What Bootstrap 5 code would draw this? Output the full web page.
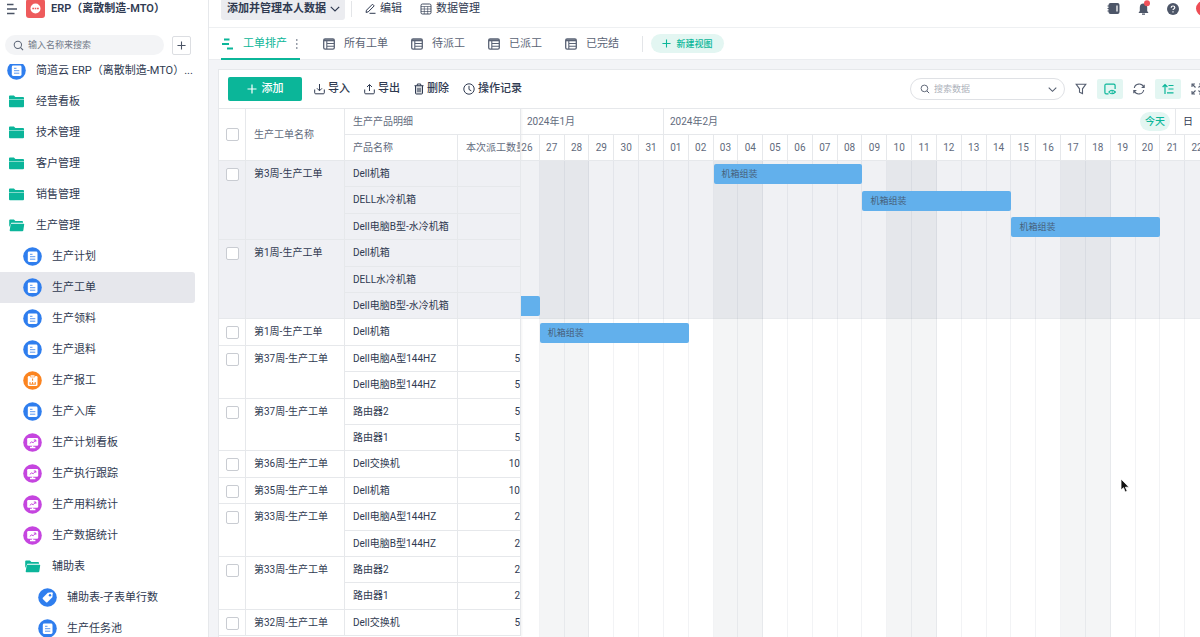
<!DOCTYPE html>
<html lang="zh-CN">
<head>
<meta charset="utf-8">
<meta name="viewport" content="width=device-width, initial-scale=1">
<title>ERP（离散制造-MTO）</title>
<link rel="stylesheet" href="https://cdn.jsdelivr.net/npm/bootstrap@5.3.0/dist/css/bootstrap.min.css">
<style>
:root { --ink:#2f3a51; --soft:#626b7d; --line:#e6e8eb; --brand:#0bb699; --mint:#e3f6f2; --blue:#2f7eee; --bar:#62b0ec; }
body { font-family: Roboto, "Noto Sans CJK SC", sans-serif; font-size: 11px; line-height: 16px; color: var(--ink); background: #fff; }
svg { display: block; flex: none; }
button, input { font: inherit; color: inherit; }
.plain { border: 0; background: none; padding: 0; }
a { color: inherit; text-decoration: none; }

/* sidebar */
.side { width: 209px; border-right: 1px solid var(--line); }
.bar-top { height: 38px; margin-top: -10px; }
.side .bar-top { height: 37px; padding-left: 7px; gap: 6px; }
.app-name { font-weight: 600; }
.find-row { padding: 8px 0 0 5px; }
.side-find { height: 20px; width: 159px; background: #f3f4f6; border-radius: 10px; padding: 0 8px; gap: 4px; color: #5b6475; font-size: 9px; }
.side-find input, .data-find input { border: 0; outline: 0; background: none; min-width: 0; padding: 0; }
.side-find input::placeholder { color: #727a89; opacity: 1; }
.add-box { width: 19px; height: 19px; border: 1px solid #dcdee2; border-radius: 2px; color: #4a5365; }
.tree { margin-top: 9px; }
.tree ul { margin-top: -9px; }
.tree a { height: 31px; padding-left: 7px; gap: 10px; margin-right: 13px; border-radius: 0 3px 3px 0; white-space: nowrap; }
.tree .lv2 { padding-left: 23px; }
.tree .lv3 { padding-left: 38px; }
.tree .on { background: #e6e7ec; }

/* top bars */
.work { background: #f3f4f7; }
.bar-top.wide { padding: 0 0 0 12px; background: #fff; border-bottom: 1px solid #eef0f2; }
.mode { height: 22px; padding: 0 5px 0 6px; gap: 4px; background: #ebecf0; border-radius: 3px; font-weight: 600; }
.head-links { margin-left: 13px; gap: 18px; }
.mode + .v-rule { margin-left: 6px; }
.head-icons { gap: 17px; margin-right: -11px; }
.v-rule { width: 1px; height: 16px; background: #e3e5e8; }
.tabs { height: 32px; background: #fff; padding-left: 12px; border-bottom: 1px solid #ebedf0; color: #5a6375; }
.tabs .tab { gap: 9px; height: 32px; margin-right: 23px; }
.tabs .tab.on { color: var(--brand); box-shadow: inset 0 -2px 0 var(--brand); padding-right: 2px; }
.new-view { height: 19px; width: 73px; border-radius: 10px; background: var(--mint); color: var(--brand); font-size: 9px; gap: 5px; font-weight: 500; }

/* panel */
.panel { background: #fff; border: 1px solid var(--line); border-width: 1px 0 0 1px; margin: 9px 0 0 9px; }
.tools { height: 38px; padding-left: 9px; font-weight: 500; }
.tools .plain { gap: 3px; }
.tool-links { gap: 14px; }
.tools .btn-add { width: 74px; height: 24px; background: var(--brand); color: #fff; border-radius: 2px; gap: 5px; margin-right: 12px; }
.data-find { width: 155px; height: 22px; border: 1px solid #dfe1e5; border-radius: 11px; padding: 0 7px 0 9px; gap: 4px; font-size: 9px; font-weight: 400; }
.data-find input::placeholder { color: #adb2bb; opacity: 1; }
.lit { width: 26px; height: 20px; background: var(--mint); color: var(--brand); border-radius: 2px; }
.view-tools { gap: 10px; margin-right: -3px; color: #555e70; }
.view-tools .btn-tool { width: 12px; }

/* order table */
.orders { width: 302px; font-size: 10px; border-top: 1px solid var(--line); box-shadow: 1px 0 2px #0000000d; }
.orders table { table-layout: fixed; width: 302px; border-collapse: separate; border-spacing: 0; }
.orders th, .orders td { height: 26px; line-height: 25px; padding: 0 0 0 8px; border: solid var(--line); border-width: 0 1px 1px 0; vertical-align: top; white-space: nowrap; overflow: hidden; }
.orders th { font-weight: 400; color: var(--soft); }
.orders th[rowspan] { vertical-align: middle; }
.orders td.num { text-align: right; padding: 0; }
.orders td.pick, .orders th.pick { padding: 0 0 0 7px; }
.orders tbody tr:nth-child(5n+2) td, .orders tbody tr:nth-child(5n+4) td { height: 27px; }
.orders .shade td { background: #eff0f4; }
.pick input { appearance: none; display: block; width: 13px; height: 13px; margin: 7px 0 0; border: 1px solid #c9ccd2; border-radius: 2px; background: #fff; }
th.pick input { margin: 0; }

/* gantt */
.gantt { font-size: 10px; color: var(--soft); border-top: 1px solid var(--line); }
.gantt .days { display: grid; grid-template-columns: repeat(28, minmax(0, 1fr)); margin: 0 -10px 0 -6px; }
.head-row > div { height: 26px; line-height: 25px; border: solid var(--line); border-width: 0 1px 1px 0; }
.month { padding-left: 6px; }
.month.first { padding-left: 12px; }
.today { height: 19px; line-height: 19px; width: 30px; border-radius: 10px; background: var(--mint); color: var(--brand); margin-right: 5px; font-weight: 500; }
.unit { border-left: 1px solid var(--line) !important; width: 34px; padding-left: 7px; color: var(--ink); height: 25px; text-align: left; }
.plan { grid-template-rows: repeat(4, 26px 27px 26px 27px 26px); }
.plan .zone { grid-area: 1 / 1 / 7 / -1; background: #f0f1f4; border-bottom: 1px solid #e9ebee; }
.plan .col-day { grid-row: 1 / -1; border-right: 1px solid #1e32500f; }
.plan .col-day.off { background: #1e32500d; }
.task { height: 20px; align-self: center; background: var(--bar); border-radius: 2px; padding-left: 8px; line-height: 20px; font-size: 9px; color: #47607a; text-align: left; z-index: 1; }
.pointer { left: 1120px; top: 478px; z-index: 5; pointer-events: none; }
</style>
</head>
<body>
<svg width="0" height="0" class="position-absolute" aria-hidden="true">
  <defs>
    <symbol id="form" viewBox="0 0 19 19"><circle cx="9.500" cy="9.500" r="9.300" fill="#2f7eee"/><rect x="4.800" y="4.500" width="9.700" height="10.500" rx="1.400" fill="#fff"/><path d="M7 7.300h2.500M7 9.700h5.300M7 12.200h5.300" stroke="#5b98f1" stroke-width="1"/></symbol>
    <symbol id="report" viewBox="0 0 19 19"><circle cx="9.500" cy="9.500" r="9.300" fill="#fb8420"/><rect x="4.800" y="5" width="9.700" height="10" rx="1.300" fill="#fff"/><path d="M7.300 4h4.500v2H7.300z" fill="#fff" stroke="#fb8420" stroke-width=".6"/><path d="M9.600 7.500v2.200M7 13v-2M9.600 13v-2M12.200 13v-2M6.400 13.200h6.500" stroke="#fb8420" stroke-width="1"/></symbol>
    <symbol id="board" viewBox="0 0 19 19"><circle cx="9.500" cy="9.500" r="9.300" fill="#c545df"/><rect x="4.200" y="5" width="11" height="7.800" rx="1.200" fill="#fff"/><path d="M9.600 12.500v2M7 14.500h5.400" stroke="#fff" stroke-width="1.400"/><path d="M6.800 10.300l2-1.500 1.300 1 2.400-2.500M10.800 7h2v1.800" fill="none" stroke="#c545df" stroke-width="1"/></symbol>
    <symbol id="tag" viewBox="0 0 19 19"><circle cx="9.500" cy="9.500" r="9.300" fill="#2f7eee"/><path d="M9.800 4.700l4-.4q.9 0 .9.900l-.3 4.100-5 5q-.7.500-1.300 0l-3.300-3.400q-.5-.6 0-1.200z" fill="#fff"/><circle cx="12" cy="7.200" r="1.200" fill="#2f7eee"/></symbol>
    <symbol id="folder" viewBox="0 0 19 19"><path d="M2 6V4.300q0-.9.900-.9h4l1.500 1.600h7.700q.9 0 .9.900v1H2z" fill="#0bb59a"/><path d="M2 7.500h15v6.800q0 1-1 1H3q-1 0-1-1z" fill="#0bb59a"/></symbol>
    <symbol id="folder-open" viewBox="0 0 19 19"><path d="M2.200 11V4.300q0-.9.900-.9h3.800l1.500 1.600h6.700q.9 0 .9.900v.9H4.400z" fill="#0bb59a"/><path d="M4.600 7.800h12q.7 0 .6.700l-.9 6q-.1.800-1 .8H3.500q-.9 0-.8-.8l.9-6q.1-.7 1-.7z" fill="#0bb59a"/></symbol>
    <symbol id="lens" viewBox="0 0 12 12"><circle cx="5.300" cy="5.300" r="4" fill="none" stroke="currentColor" stroke-width="1.100"/><path d="M8.300 8.300l2.700 2.700" stroke="currentColor" stroke-width="1.200"/></symbol>
    <symbol id="plus" viewBox="0 0 10 10"><path d="M5 .5v9M.5 5h9" stroke="currentColor" stroke-width="1.200"/></symbol>
    <symbol id="chev" viewBox="0 0 10 10"><path d="M.8 2.800l4.200 4.200 4.200-4.200" fill="none" stroke="currentColor" stroke-width="1.200"/></symbol>
    <symbol id="grid" viewBox="0 0 12 12"><rect x=".7" y=".9" width="10.600" height="10.200" rx="1.400" fill="none" stroke="currentColor" stroke-width="1.300"/><path d="M1 2.300h10" stroke="currentColor" stroke-width="2"/><path d="M3.800 3v8M4 5.500h7M4 8.300h7" stroke="currentColor" stroke-width="1.100"/></symbol>
  </defs>
</svg>

<div class="d-flex vh-100 overflow-hidden">
  <aside class="side d-flex flex-column flex-shrink-0 overflow-hidden">
    <div class="bar-top d-flex align-items-center flex-shrink-0">
      <button class="plain" aria-label="菜单"><svg width="13" height="12" viewBox="0 0 13 12"><path d="M0 1.500h6.500M0 6h10M0 10.500h7.500" stroke="#4a5365" stroke-width="1.300"/></svg></button>
      <svg width="19" height="19" viewBox="0 0 19 19"><rect width="19" height="19" rx="3" fill="#ee5b5c"/><circle cx="9.500" cy="9.500" r="5" fill="#fff"/><path d="M6.300 9.500h1.800M8.800 9.500h1.500M11 9.500h1.800" stroke="#ee5b5c" stroke-width="1.700"/></svg>
      <span class="app-name text-nowrap">ERP（离散制造-MTO）</span>
    </div>
    <div class="find-row d-flex align-items-center flex-shrink-0 gap-2">
      <label class="side-find d-flex align-items-center"><svg width="11" height="11"><use href="#lens"/></svg><input class="flex-fill" type="text" placeholder="输入名称来搜索" aria-label="输入名称来搜索"></label>
      <button class="plain add-box d-flex align-items-center justify-content-center" aria-label="新建"><svg width="9" height="9"><use href="#plus"/></svg></button>
    </div>
    <nav class="tree overflow-hidden flex-fill">
      <ul class="list-unstyled mb-0">
        <li><a href="#" class="d-flex align-items-center me-0"><svg width="19" height="19"><use href="#form"/></svg>简道云 ERP（离散制造-MTO）...</a></li>
        <li><a href="#" class="d-flex align-items-center"><svg width="19" height="19"><use href="#folder"/></svg>经营看板</a></li>
        <li><a href="#" class="d-flex align-items-center"><svg width="19" height="19"><use href="#folder"/></svg>技术管理</a></li>
        <li><a href="#" class="d-flex align-items-center"><svg width="19" height="19"><use href="#folder"/></svg>客户管理</a></li>
        <li><a href="#" class="d-flex align-items-center"><svg width="19" height="19"><use href="#folder"/></svg>销售管理</a></li>
        <li><a href="#" class="d-flex align-items-center"><svg width="19" height="19"><use href="#folder-open"/></svg>生产管理</a></li>
        <li><a href="#" class="lv2 d-flex align-items-center"><svg width="19" height="19"><use href="#form"/></svg>生产计划</a></li>
        <li><a href="#" class="lv2 on d-flex align-items-center" aria-current="page"><svg width="19" height="19"><use href="#form"/></svg>生产工单</a></li>
        <li><a href="#" class="lv2 d-flex align-items-center"><svg width="19" height="19"><use href="#form"/></svg>生产领料</a></li>
        <li><a href="#" class="lv2 d-flex align-items-center"><svg width="19" height="19"><use href="#form"/></svg>生产退料</a></li>
        <li><a href="#" class="lv2 d-flex align-items-center"><svg width="19" height="19"><use href="#report"/></svg>生产报工</a></li>
        <li><a href="#" class="lv2 d-flex align-items-center"><svg width="19" height="19"><use href="#form"/></svg>生产入库</a></li>
        <li><a href="#" class="lv2 d-flex align-items-center"><svg width="19" height="19"><use href="#board"/></svg>生产计划看板</a></li>
        <li><a href="#" class="lv2 d-flex align-items-center"><svg width="19" height="19"><use href="#board"/></svg>生产执行跟踪</a></li>
        <li><a href="#" class="lv2 d-flex align-items-center"><svg width="19" height="19"><use href="#board"/></svg>生产用料统计</a></li>
        <li><a href="#" class="lv2 d-flex align-items-center"><svg width="19" height="19"><use href="#board"/></svg>生产数据统计</a></li>
        <li><a href="#" class="lv2 d-flex align-items-center"><svg width="19" height="19"><use href="#folder-open"/></svg>辅助表</a></li>
        <li><a href="#" class="lv3 d-flex align-items-center"><svg width="19" height="19"><use href="#tag"/></svg>辅助表-子表单行数</a></li>
        <li><a href="#" class="lv3 d-flex align-items-center"><svg width="19" height="19"><use href="#form"/></svg>生产任务池</a></li>
      </ul>
    </nav>
  </aside>

  <main class="work d-flex flex-column flex-fill overflow-hidden">
    <header class="bar-top wide d-flex align-items-center flex-shrink-0">
      <button class="plain mode d-flex align-items-center">添加并管理本人数据<svg width="10" height="10"><use href="#chev"/></svg></button>
      <span class="v-rule"></span>
      <div class="head-links d-flex">
        <button class="plain d-flex align-items-center gap-1"><svg width="11" height="11" viewBox="0 0 11 11"><path d="M1.500 7.200l6-6 1.700 1.700-6 6-2.200.5zM4.500 10.300h6" fill="none" stroke="currentColor"/></svg>编辑</button>
        <button class="plain d-flex align-items-center gap-1"><svg width="12" height="12" viewBox="0 0 12 12"><rect x="1" y="1" width="10" height="10" rx="1.500" fill="none" stroke="currentColor" stroke-width=".9"/><path d="M1 3.500h10M1 6h10M1 8.500h10M4.300 3.500v7.500M7.700 3.500v7.500" stroke="currentColor" stroke-width=".6"/></svg>数据管理</button>
      </div>
      <div class="head-icons ms-auto d-flex align-items-center">
        <button class="plain" aria-label="通讯录"><svg width="13" height="13" viewBox="0 0 13 13"><rect x="1.500" y="1" width="11" height="11" rx="2" fill="#4d5668"/><path d="M10 3.500v6" stroke="#fff" stroke-width="1.300"/><path d="M.5 4h2M.5 6.500h2M.5 9h2" stroke="#4d5668"/></svg></button>
        <button class="plain" aria-label="通知"><svg width="13" height="17" viewBox="0 0 13 17"><path d="M6.500 3.500q3.700 0 3.700 4v3.500l1.300 2H1.500l1.300-2V7.500q0-4 3.700-4zM5 13.500h3v1.300H5z" fill="#4d5668"/><circle cx="10" cy="3.300" r="3" fill="#f1525a"/></svg></button>
        <button class="plain" aria-label="帮助"><svg width="12" height="12" viewBox="0 0 12 12"><circle cx="6" cy="6" r="6" fill="#4d5668"/><path d="M4.200 4.800q0-1.800 1.800-1.800t1.800 1.600q0 .8-1 1.400-.8.500-.8 1.100M6 8.200v1.200" fill="none" stroke="#fff" stroke-width="1.200"/></svg></button>
        <button class="plain" aria-label="账号"><svg width="15" height="15"><circle cx="7.500" cy="7.500" r="7.500" fill="#ee4d55"/></svg></button>
      </div>
    </header>

    <nav class="tabs d-flex align-items-center flex-shrink-0">
      <a href="#" class="tab on d-flex align-items-center"><svg width="13" height="12" viewBox="0 0 13 12"><path d="M3 1.500h5.500M1 6h7M6 10.500h6" stroke="currentColor" stroke-width="2"/></svg>工单排产<svg width="2" height="10" viewBox="0 0 2 10"><path d="M0 1h1.500M0 5h1.500M0 9h1.500" stroke="#777f8d" stroke-width="1.500"/></svg></a>
      <a href="#" class="tab d-flex align-items-center"><svg width="12" height="12"><use href="#grid"/></svg>所有工单</a>
      <a href="#" class="tab d-flex align-items-center"><svg width="12" height="12"><use href="#grid"/></svg>待派工</a>
      <a href="#" class="tab d-flex align-items-center"><svg width="12" height="12"><use href="#grid"/></svg>已派工</a>
      <a href="#" class="tab d-flex align-items-center"><svg width="12" height="12"><use href="#grid"/></svg>已完结</a>
      <span class="v-rule me-2"></span>
      <button class="plain new-view d-flex align-items-center justify-content-center"><svg width="9" height="9"><use href="#plus"/></svg>新建视图</button>
    </nav>

    <section class="panel flex-fill d-flex flex-column overflow-hidden">
      <div class="tools d-flex align-items-center flex-shrink-0">
        <button class="plain btn-add d-flex align-items-center justify-content-center"><svg width="10" height="10"><use href="#plus"/></svg>添加</button>
        <div class="tool-links d-flex">
          <button class="plain d-flex align-items-center"><svg width="11" height="12" viewBox="0 0 11 12"><path d="M5.500 1v6.500M3 5.300l2.500 2.500L8 5.300M.7 6.500v3.300q0 1 1 1h7.600q1 0 1-1V6.500" fill="none" stroke="currentColor"/></svg>导入</button>
          <button class="plain d-flex align-items-center"><svg width="11" height="12" viewBox="0 0 11 12"><path d="M5.500 8V1.500M3 4l2.500-2.500L8 4M.7 6.500v3.300q0 1 1 1h7.600q1 0 1-1V6.500" fill="none" stroke="currentColor"/></svg>导出</button>
          <button class="plain d-flex align-items-center"><svg width="10" height="12" viewBox="0 0 10 12"><path d="M1.500 3h7v7.200q0 .8-.8.800H2.300q-.8 0-.8-.8z" fill="#2f3a5133"/><path d="M.5 2.700h9M3.300 2.500V1h3.400v1.500M1.500 3v7.200q0 .8.800.8h5.400q.8 0 .8-.8V3M4 5v4M6 5v4" fill="none" stroke="currentColor"/></svg>删除</button>
          <button class="plain d-flex align-items-center"><svg width="12" height="12" viewBox="0 0 12 12"><circle cx="6" cy="6" r="5.200" fill="none" stroke="currentColor"/><path d="M6 2.800V6.500l2.300 1.300" fill="none" stroke="currentColor"/></svg>操作记录</button>
        </div>
        <div class="view-tools ms-auto d-flex align-items-center">
          <label class="data-find d-flex align-items-center"><svg width="10" height="10"><use href="#lens"/></svg><input class="flex-fill" type="text" placeholder="搜索数据" aria-label="搜索数据"><svg width="9" height="9"><use href="#chev"/></svg></label>
          <button class="plain btn-tool" aria-label="筛选"><svg width="12" height="12" viewBox="0 0 12 12"><path d="M1.200 1.300h9.600L7.500 5.800v4.800L4.500 9.200V5.800z" fill="none" stroke="currentColor" stroke-width="1.100"/></svg></button>
          <button class="plain lit d-flex align-items-center justify-content-center" aria-label="字段"><svg width="12" height="12" viewBox="0 0 12 12"><path d="M4.500 10.900H2.200q-1.300 0-1.300-1.300V2.400q0-1.300 1.300-1.300h7.600q1.300 0 1.300 1.300V6" fill="none" stroke="currentColor" stroke-width="1.200"/><path d="M4.800 9q3-3.500 6.600 0-3.600 3.500-6.600 0z" fill="none" stroke="currentColor" stroke-width="1.100"/><circle cx="8.200" cy="9" r=".8" fill="currentColor"/></svg></button>
          <button class="plain btn-tool" aria-label="刷新"><svg width="12" height="12" viewBox="0 0 12 12"><path d="M1.300 5A4.900 4.900 0 0 1 10.600 4M10.700 7A4.900 4.900 0 0 1 1.400 8M11.200 1.800V4.500H8.600M.8 10.200V7.500h2.600" fill="none" stroke="currentColor" stroke-width="1.100"/></svg></button>
          <button class="plain lit d-flex align-items-center justify-content-center" aria-label="行高"><svg width="12" height="12" viewBox="0 0 12 12"><path d="M3 11V1.500M.6 4L3 1.500 5.400 4M6.500 2.500h5M6.500 6h5M5 9.800h6.500" fill="none" stroke="currentColor" stroke-width="1.200"/></svg></button>
          <button class="plain btn-tool" aria-label="全屏"><svg width="12" height="12" viewBox="0 0 12 12"><path d="M1 4V1h3M8 1h3v3M11 8v3H8M4 11H1V8M1 1l3.500 3.500M11 1L7.500 4.500M11 11L7.500 7.500M1 11l3.500-3.500" fill="none" stroke="currentColor" stroke-width="1.100"/></svg></button>
        </div>
      </div>

      <div class="d-flex flex-fill overflow-hidden">
        <div class="orders flex-shrink-0 overflow-hidden">
          <table>
            <colgroup><col style="width:27px"><col style="width:99px"><col style="width:113px"><col></colgroup>
            <thead>
              <tr><th class="pick" rowspan="2"><input type="checkbox" aria-label="全选"></th><th rowspan="2">生产工单名称</th><th colspan="2">生产产品明细</th></tr>
              <tr><th>产品名称</th><th>本次派工数量</th></tr>
            </thead>
            <tbody id="orders"></tbody>
          </table>
        </div>
        <div class="gantt flex-fill overflow-hidden">
          <div class="days head-row">
            <div class="month first" style="grid-column:1 / 7">2024年1月</div>
            <div class="month d-flex align-items-center" style="grid-column:7 / -1">2024年2月
              <button class="plain today ms-auto">今天</button>
              <button class="plain unit">日</button>
            </div>
          </div>
          <div class="days head-row text-center" id="dates"></div>
          <div class="days plan" id="plan"><div class="zone"></div></div>
        </div>
      </div>
    </section>
  </main>
</div>

<svg class="pointer position-absolute" width="10" height="15" viewBox="0 0 10 15"><path d="M1 1v11l2.500-2.300L5.200 14l2-.9-1.800-3.900H9z" fill="#111" stroke="#fff" stroke-width=".8"/></svg>

<script src="https://cdn.jsdelivr.net/npm/bootstrap@5.3.0/dist/js/bootstrap.bundle.min.js"></script>
<script>
const orders = [
  ['第3周-生产工单', [['Dell机箱', ''], ['DELL水冷机箱', ''], ['Dell电脑B型-水冷机箱', '']], true],
  ['第1周-生产工单', [['Dell机箱', ''], ['DELL水冷机箱', ''], ['Dell电脑B型-水冷机箱', '']], true],
  ['第1周-生产工单', [['Dell机箱', '']]],
  ['第37周-生产工单', [['Dell电脑A型144HZ', 5], ['Dell电脑B型144HZ', 5]]],
  ['第37周-生产工单', [['路由器2', 5], ['路由器1', 5]]],
  ['第36周-生产工单', [['Dell交换机', 10]]],
  ['第35周-生产工单', [['Dell机箱', 10]]],
  ['第33周-生产工单', [['Dell电脑A型144HZ', 2], ['Dell电脑B型144HZ', 2]]],
  ['第33周-生产工单', [['路由器2', 2], ['路由器1', 2]]],
  ['第32周-生产工单', [['Dell交换机', 5]]]
];
document.getElementById('orders').innerHTML = orders.map(([name, items, shade]) =>
  items.map(([item, n], i) => `<tr class="${shade ? 'shade' : ''}">` +
    (i ? '' : `<td class="pick" rowspan="${items.length}"><input type="checkbox" aria-label="${name}"></td><td rowspan="${items.length}">${name}</td>`) +
    `<td>${item}</td><td class="num">${n}</td></tr>`).join('')).join('');

// 28 days starting on Friday 26 January 2024
const dates = document.getElementById('dates'), plan = document.getElementById('plan');
for (let i = 0; i < 28; i++) {
  const d = new Date(2024, 0, 26 + i), off = d.getDay() % 6 === 0;
  dates.insertAdjacentHTML('beforeend', `<div>${String(d.getDate()).padStart(2, '0')}</div>`);
  plan.insertAdjacentHTML('beforeend', `<div class="col-day ${off ? 'off' : ''}" style="grid-column:${i + 1}"></div>`);
}
// row, first day column, length in days, label
[[1, 9, 6, '机箱组装'], [2, 15, 6, '机箱组装'], [3, 21, 6, '机箱组装'], [6, 1, 1, ''], [7, 2, 6, '机箱组装']].forEach(([row, start, len, label]) =>
  plan.insertAdjacentHTML('beforeend', `<div class="task" style="grid-area:${row} / ${start} / auto / span ${len}">${label}</div>`));
</script>
</body>
</html>
